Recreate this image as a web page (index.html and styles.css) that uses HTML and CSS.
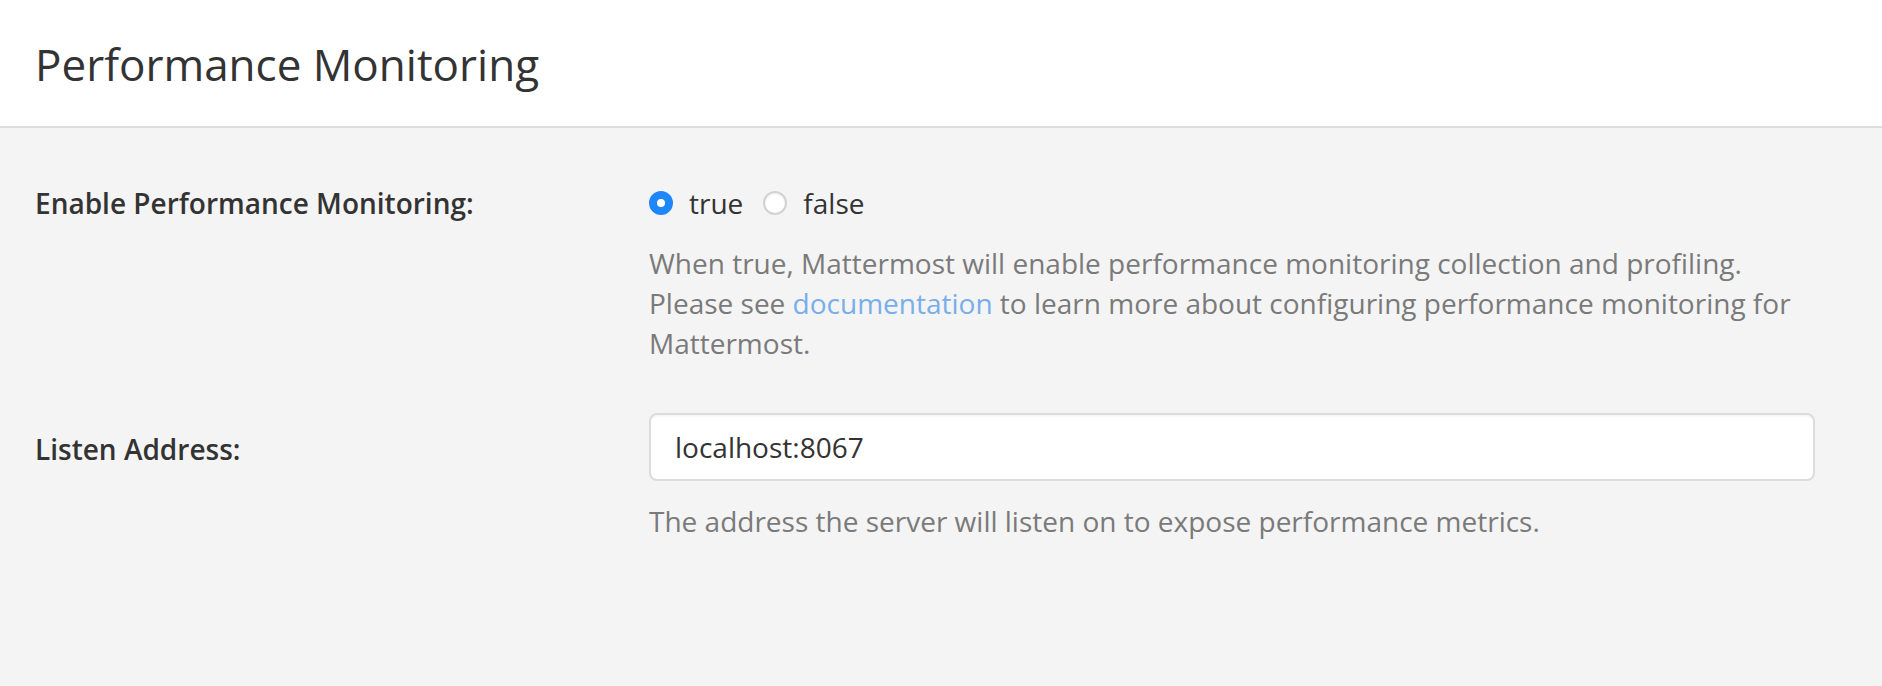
FILE: index.html
```html
<!DOCTYPE html>
<html lang="en">
<head>
<meta charset="utf-8">
<title>Performance Monitoring</title>
<link rel="stylesheet" href="styles.css">
</head>
<body>
<div class="page">
  <header class="header">
    <h1 class="title">Performance Monitoring</h1>
  </header>
  <main class="content">
    <div class="form-row">
      <label class="label">Enable Performance Monitoring:</label>
      <div class="control">
        <div class="radios">
          <label class="radio-option"><span class="radio checked"></span><span class="radio-text">true</span></label>
          <label class="radio-option"><span class="radio"></span><span class="radio-text">false</span></label>
        </div>
        <p class="help-text">When true, Mattermost will enable performance monitoring collection and profiling. Please see <a class="link" href="#">documentation</a> to learn more about configuring performance monitoring for Mattermost.</p>
      </div>
    </div>
    <div class="form-row">
      <label class="label label-input">Listen Address:</label>
      <div class="control">
        <input class="text-input" type="text" value="localhost:8067">
        <p class="help-text">The address the server will listen on to expose performance metrics.</p>
      </div>
    </div>
  </main>
</div>
</body>
</html>
```

FILE: styles.css
```css
html, body {
  margin: 0;
  padding: 0;
  height: 100%;
}

body {
  font-family: "Open Sans", "Noto Sans", sans-serif;
  background: #f4f4f4;
  color: #333333;
}

.page {
  min-height: 100%;
}

.header {
  background: #ffffff;
  border-bottom: 2px solid #dddddd;
  padding: 34px 36px 32px 35px;
}

.title {
  margin: 0;
  font-size: 44px;
  font-weight: 400;
  line-height: 60px;
  color: #333333;
}

.content {
  padding: 55px 67px 0 35px;
  display: flex;
  flex-direction: column;
  gap: 50px;
}

.form-row {
  display: grid;
  grid-template-columns: 614px 1fr;
}

.label {
  font-size: 28px;
  font-weight: 600;
  line-height: 40px;
  color: #333333;
}

.label-input {
  padding-top: 16px;
}

.control {
  display: flex;
  flex-direction: column;
}

.radios {
  display: flex;
  align-items: center;
  gap: 20px;
  height: 40px;
}

.radio-option {
  display: flex;
  align-items: center;
  gap: 16px;
  font-size: 28px;
  line-height: 40px;
  color: #333333;
}

.radio {
  width: 24px;
  height: 24px;
  border-radius: 50%;
  box-sizing: border-box;
  background: #ffffff;
  border: 2px solid #d2d2d2;
  box-shadow: inset 0 1px 2px rgba(0, 0, 0, 0.08);
}

.radio.checked {
  background: #ffffff;
  border: 8px solid #1e87fa;
  box-shadow: none;
}

.help-text {
  margin: 20px 0 0;
  font-size: 28px;
  line-height: 40px;
  color: #7a7a7a;
}

.link {
  color: #78aeea;
  text-decoration: none;
}

.text-input {
  box-sizing: border-box;
  width: 100%;
  height: 68px;
  border: 2px solid #dcdcdc;
  border-radius: 8px;
  background: #ffffff;
  padding: 0 24px;
  font-family: "Open Sans", "Noto Sans", sans-serif;
  font-size: 28px;
  color: #333333;
  box-shadow: inset 0 2px 2px rgba(0, 0, 0, 0.04);
  outline: none;
}
```
